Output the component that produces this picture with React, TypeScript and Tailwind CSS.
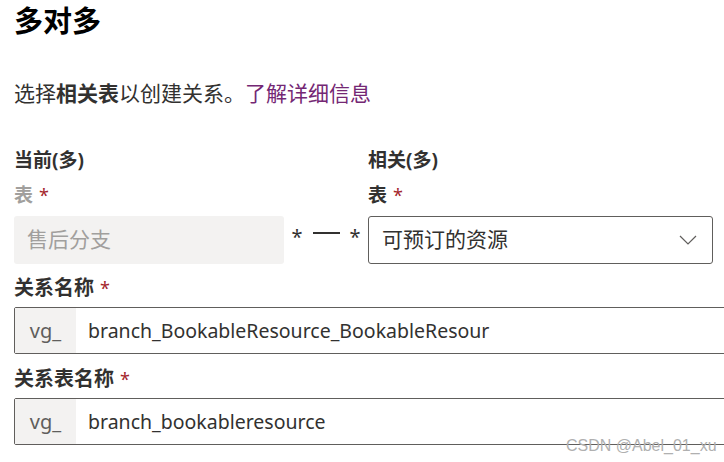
const font = { fontFamily: '"Noto Sans", "Noto Sans CJK SC", sans-serif' };

const Required = () => <span className="ml-[6px] text-[18px] font-normal text-[#a4262c]">*</span>;

const PrefixInput = ({ value }: { value: string }) => (
  <div className="flex h-[47px] w-[740px] rounded-[2px] border border-[#605e5c] bg-white">
    <div className="flex w-[61px] shrink-0 items-center justify-center bg-[#f3f2f1] text-[20px] text-[#605e5c]">vg_</div>
    <div className="flex items-center whitespace-nowrap pl-[12px] text-[19.5px] text-[#323130]">{value}</div>
  </div>
);

export default function App() {
  return (
    <div className="relative h-[462px] w-[724px] overflow-hidden bg-white pl-[14px]" style={font}>
      <h1 className="pt-[1px] text-[29px] font-bold leading-[40px] text-black">多对多</h1>
      <p className="mt-[38px] text-[21px] leading-[28px] text-[#323130]">
        选择<span className="font-bold">相关表</span>以创建关系。<a className="text-[#742774]">了解详细信息</a>
      </p>

      <div className="mt-[40px] flex items-end">
        <div className="flex w-[270px] flex-col">
          <div className="text-[19px] font-bold leading-[26px] text-[#323130]">当前(多)</div>
          <div className="mt-[9px] text-[19px] font-bold leading-[26px] text-[#a19f9d]">
            表<Required />
          </div>
          <div className="mt-[8px] flex h-[48px] items-center rounded-[3px] bg-[#f3f2f1] px-[13px] text-[21px] text-[#a19f9d]">
            售后分支
          </div>
        </div>
        <div className="flex h-[48px] w-[84px] items-start justify-center gap-[10px] pt-[6px] text-[20px] text-[#323130]">
          <span>*</span>
          <span className="mt-[10px] h-[1.5px] w-[27px] bg-[#323130]" />
          <span>*</span>
        </div>
        <div className="flex w-[345px] flex-col">
          <div className="text-[19px] font-bold leading-[26px] text-[#323130]">相关(多)</div>
          <div className="mt-[9px] text-[19px] font-bold leading-[26px] text-[#323130]">
            表<Required />
          </div>
          <div className="mt-[8px] flex h-[48px] items-center justify-between rounded-[3px] border border-[#605e5c] pl-[13px] pr-[15px] text-[21px] text-[#323130]">
            <span>可预订的资源</span>
            <svg width="18" height="10" viewBox="0 0 18 10" fill="none" stroke="#605e5c" strokeWidth="1.2">
              <path d="M1 1l8 8 8-8" />
            </svg>
          </div>
        </div>
      </div>

      <div className="mt-[11px] text-[20px] font-bold leading-[26px] text-[#323130]">
        关系名称<Required />
      </div>
      <div className="mt-[6px]">
        <PrefixInput value="branch_BookableResource_BookableResour" />
      </div>

      <div className="mt-[12px] text-[20px] font-bold leading-[26px] text-[#323130]">
        关系表名称<Required />
      </div>
      <div className="mt-[6px]">
        <PrefixInput value="branch_bookableresource" />
      </div>

      <div
        className="absolute left-[566px] top-[434px] text-[16px] text-[#b0b0b0]"
        style={{ fontFamily: '"Liberation Sans", sans-serif' }}
      >
        CSDN @Abel_01_xu
      </div>
    </div>
  );
}
